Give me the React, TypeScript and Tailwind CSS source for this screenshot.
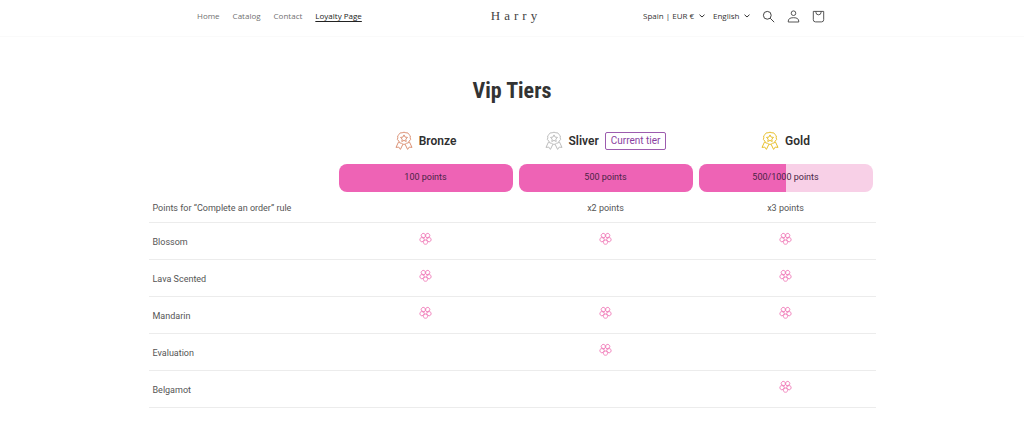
import * as React from 'react';

const links = ['Home', 'Catalog', 'Contact', 'Loyalty Page'];

const tiers = [
  { name: 'Bronze', color: '#dc9377', points: '100 points', progress: 100, current: false },
  { name: 'Sliver', color: '#bdbdbd', points: '500 points', progress: 100, current: true },
  { name: 'Gold', color: '#e8c02c', points: '500/1000 points', progress: 50, current: false },
];

const benefits = [
  { name: 'Blossom', tiers: [true, true, true] },
  { name: 'Lava Scented', tiers: [true, false, true] },
  { name: 'Mandarin', tiers: [true, true, true] },
  { name: 'Evaluation', tiers: [false, true, false] },
  { name: 'Belgamot', tiers: [false, false, true] },
];

const petals = [0, 72, 144, 216, 288];

function Medal({ color }: { color: string }) {
  return (
    <svg className="h-5 w-[18px]" viewBox="0 0 18 20" fill="none" stroke={color} strokeWidth="1" strokeLinejoin="round" aria-hidden="true">
      <path d="M9 1.2 10.9 1.8 12.8 1.9 13.9 3.5 15.3 4.8 15.2 6.8 15.6 8.6 14.2 10 13.4 11.8 11.5 12.3 9.9 13.4 9 13.1 8.1 13.4 6.5 12.3 4.6 11.8 3.8 10 2.4 8.6 2.8 6.8 2.7 4.8 4.1 3.5 5.2 1.9 7.1 1.8Z" />
      <path d="m9 3.9 1.1 2.2 2.4.3-1.7 1.7.4 2.4L9 9.4l-2.2 1.1.4-2.4-1.7-1.7 2.4-.3Z" />
      <path d="M3.6 10.9 1 16.4l2.8-.3 1.6 2.3 2.5-5.1M14.4 10.9l2.6 5.5-2.8-.3-1.6 2.3-2.5-5.1" />
    </svg>
  );
}

function Flower() {
  return (
    <svg className="mx-auto size-[13px]" viewBox="0 0 26 26" fill="none" stroke="#f07fba" strokeWidth="1.8" role="img" aria-label="Included">
      {petals.map(angle => (
        <path key={angle} d="M11.2 16 9 19.500C8.300 22.500 10 24.500 13 24.500s4.700-2 4-5L14.800 16Z" transform={`rotate(${angle} 13 13)`} />
      ))}
    </svg>
  );
}

function Picker({ label, value }: { label: string; value: string }) {
  return (
    <div className="flex items-center gap-1">
      <select aria-label={label} className="h-5 appearance-none bg-transparent leading-5 text-[#333333]" defaultValue={value}>
        <option>{value}</option>
      </select>
      <svg className="h-1 w-[6px]" viewBox="0 0 6 4" fill="none" stroke="#333333" aria-hidden="true">
        <path d="m.5.7 2.5 2.3L5.500.7" />
      </svg>
    </div>
  );
}

function Header() {
  return (
    <header className="border-b border-[#fafafa] font-['Open_Sans',sans-serif] text-[8px] text-[#707070]">
      <div className="mx-auto grid h-9 max-w-[630px] grid-cols-[1fr_auto_1fr] items-center pb-1">
        <nav className="flex gap-[13px]">
          {links.map(link => (
            <a
              key={link}
              href="#"
              className={link === 'Loyalty Page' ? 'text-[#222222] underline underline-offset-2' : ''}
            >
              {link}
            </a>
          ))}
        </nav>
        <a href="#" className="pl-2 font-['Liberation_Serif',serif] text-[13px] tracking-[4px] text-[#444444]">
          Harry
        </a>
        <div className="flex items-center justify-end gap-3 pr-0.5">
          <div className="flex items-center gap-2">
            <Picker label="Country" value="Spain | EUR €" />
            <Picker label="Language" value="English" />
          </div>
          <div className="flex items-center gap-3">
            <button aria-label="Search">
              <svg className="size-[13px]" viewBox="0 0 13 13" fill="none" stroke="#444444">
                <circle cx="5.300" cy="5.300" r="3.900" />
                <path d="m8.200 8.200 4 4" />
              </svg>
            </button>
            <button aria-label="Account">
              <svg className="size-[13px]" viewBox="0 0 13 13" fill="none" stroke="#444444" strokeWidth="0.9">
                <circle cx="6.500" cy="3.200" r="2.300" />
                <path d="M1.200 12c0-3.300 1.600-4.300 5.300-4.300s5.300 1 5.300 4.300Z" />
              </svg>
            </button>
            <button aria-label="Cart">
              <svg className="size-[13px]" viewBox="0 0 13 13" fill="none" stroke="#444444" strokeWidth="0.9">
                <path d="M1.300 1.400h10.400v8.300a2.200 2.200 0 0 1-2.200 2.200h-6a2.200 2.200 0 0 1-2.200-2.200Z" />
                <path d="M3.900 1.400v.8a2.600 2.600 0 0 0 5.200 0v-.8" />
              </svg>
            </button>
          </div>
        </div>
      </div>
    </header>
  );
}

function TierTable() {
  return (
    <table className="mx-auto w-full max-w-[727px] table-fixed border-collapse text-[9px] text-[#555555]">
      <colgroup>
        <col />
        <col className="w-[180px]" />
        <col className="w-[180px]" />
        <col className="w-[180px]" />
      </colgroup>
      <thead>
        <tr className="h-[39px]">
          <td />
          {tiers.map(tier => (
            <th key={tier.name} scope="col" className="text-[12px] font-semibold text-[#2f2f2f]">
              <div className="flex items-center justify-center gap-[6px]">
                <Medal color={tier.color} />
                <span>{tier.name}</span>
                {tier.current && (
                  <span className="rounded-xs border border-[#9c5cae] px-[5px] text-[10px] leading-4 font-normal text-[#8a3fa0]">
                    Current tier
                  </span>
                )}
              </div>
            </th>
          ))}
        </tr>
      </thead>
      <tbody>
        <tr className="h-9">
          <td />
          {tiers.map(tier => (
            <td key={tier.name} className="px-[3px]">
              <div className="grid h-7 items-center overflow-hidden rounded-lg bg-[#f8d0e7] text-center text-[#4a2445]">
                <div className="col-start-1 row-start-1 h-full bg-[#ee63b5]" style={{ width: `${tier.progress}%` }} />
                <span className="col-start-1 row-start-1">{tier.points}</span>
              </div>
            </td>
          ))}
        </tr>
        <tr className="h-[26px] border-b border-[#ececec]">
          <th scope="row" className="pl-1 text-left font-normal">Points for “Complete an order” rule</th>
          <td />
          <td className="text-center">x2 points</td>
          <td className="text-center">x3 points</td>
        </tr>
        {benefits.map(benefit => (
          <tr key={benefit.name} className="h-[37px] border-b border-[#ececec]">
            <th scope="row" className="pt-1 pl-1 text-left font-normal">{benefit.name}</th>
            {benefit.tiers.map((included, i) => (
              <td key={i} className="pb-1">{included && <Flower />}</td>
            ))}
          </tr>
        ))}
      </tbody>
    </table>
  );
}

export default function App() {
  return (
    <div className="min-h-screen bg-white font-[Roboto,sans-serif]">
      <Header />
      <main className="px-4 pt-9">
        <h1 className="pb-3 text-center font-['Liberation_Sans_Narrow','Roboto_Condensed',sans-serif] text-[22px] leading-9 font-bold text-[#333333]">
          Vip Tiers
        </h1>
        <TierTable />
      </main>
    </div>
  );
}
